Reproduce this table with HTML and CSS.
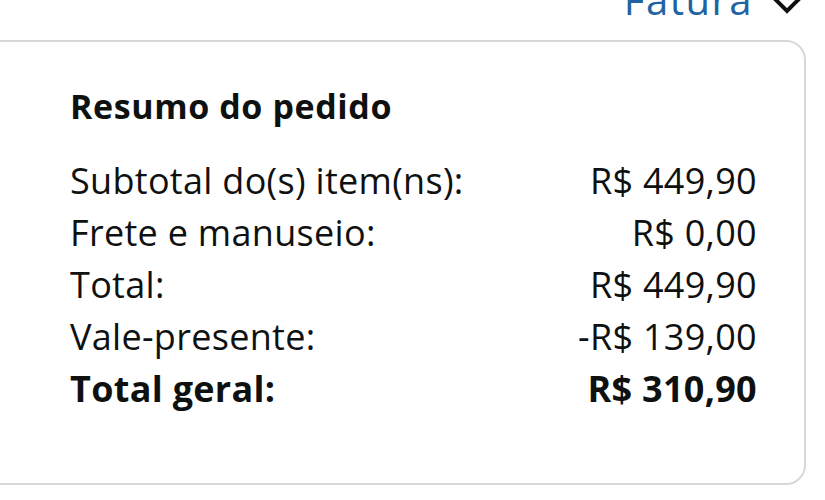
FILE: index.html
```html
<!DOCTYPE html>
<html lang="pt-BR">
<head>
<meta charset="utf-8">
<title>Resumo do pedido</title>
<link rel="stylesheet" href="styles.css">
</head>
<body>
<div class="page">
  <div class="topbar">
    <a class="invoice" href="#">Fatura</a>
    <svg class="chev" width="32" height="20" viewBox="0 0 32 20" aria-hidden="true">
      <polyline points="3,3 16,16 29,3" fill="none" stroke="#0f1111" stroke-width="4" stroke-linecap="square"/>
    </svg>
  </div>
  <section class="card">
    <h2 class="title">Resumo do pedido</h2>
    <div class="rows">
      <div class="row"><span>Subtotal do(s) item(ns):</span><span>R$ 449,90</span></div>
      <div class="row"><span>Frete e manuseio:</span><span>R$ 0,00</span></div>
      <div class="row"><span>Total:</span><span>R$ 449,90</span></div>
      <div class="row"><span>Vale-presente:</span><span>-R$ 139,00</span></div>
      <div class="row total"><span>Total geral:</span><span>R$ 310,90</span></div>
    </div>
  </section>
</div>
</body>
</html>
```

FILE: styles.css
```css
html, body {
  margin: 0;
  padding: 0;
  background: #ffffff;
}
body {
  font-family: "Open Sans", "Noto Sans", sans-serif;
  color: #0f1111;
  overflow: hidden;
  width: 825px;
  height: 500px;
}
.page {
  display: flex;
  flex-direction: column;
}
.topbar {
  display: flex;
  justify-content: flex-end;
  align-items: flex-end;
  height: 40px;
  margin-top: -22px;
  padding-right: 22px;
  gap: 18px;
}
.invoice {
  color: #2162a1;
  text-decoration: none;
  font-size: 40px;
  letter-spacing: 1.5px;
  line-height: 40px;
  margin-bottom: -2px;
}
.chev {
  display: block;
  margin-bottom: 3px;
}
.card {
  margin-left: -24px;
  width: 830px;
  height: 445px;
  box-sizing: border-box;
  border: 2px solid #d5d9d9;
  border-radius: 20px;
  margin-top: 22px;
  padding: 44px 47px 0 92px;
}
.title {
  margin: 0 0 29px;
  font-size: 34px;
  letter-spacing: 0.6px;
  font-weight: 700;
  line-height: 40px;
}
.rows {
  display: flex;
  flex-direction: column;
}
.row {
  display: flex;
  justify-content: space-between;
  font-size: 36px;
  letter-spacing: 0.3px;
  line-height: 52px;
}
.row.total {
  font-weight: 700;
}
```
